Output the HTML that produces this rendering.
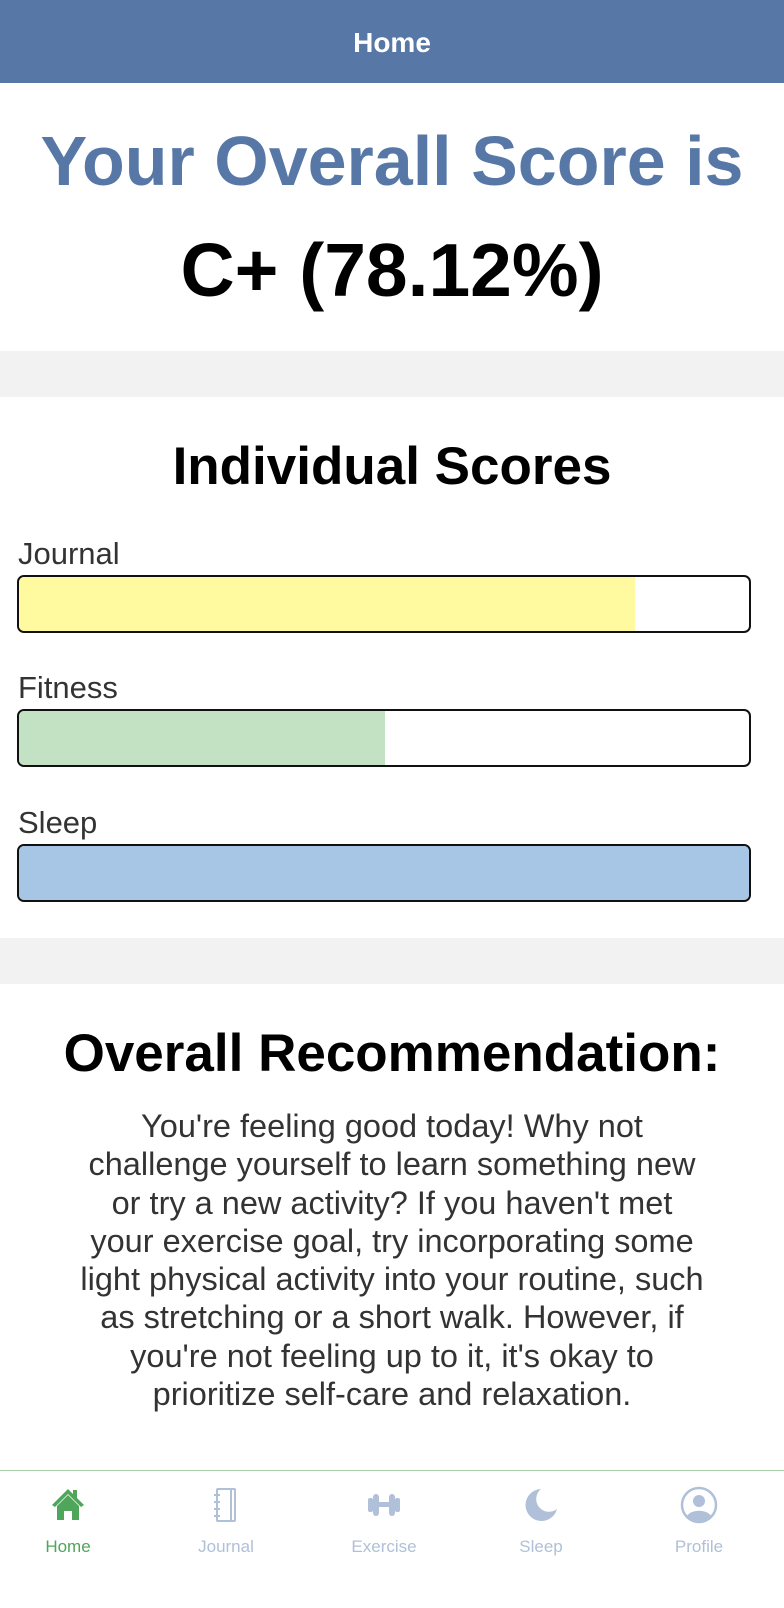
<!DOCTYPE html>
<html><head><style>
*{margin:0;padding:0;box-sizing:border-box}
body{width:784px;height:1608px;background:#fff;font-family:"Liberation Sans",sans-serif;position:relative;overflow:hidden}
.hdr{height:83px;background:#5778a6;color:#fff;font-size:28px;font-weight:bold;text-align:center;line-height:86px}
.t1{position:absolute;top:121px;width:100%;text-align:center;font-size:70px;font-weight:bold;color:#5778a6}
.t2{position:absolute;top:227px;width:100%;text-align:center;font-size:75px;font-weight:bold;color:#000}
.band{position:absolute;left:0;width:784px;height:46px;background:#f2f2f2}
.h2{position:absolute;width:100%;text-align:center;font-size:53px;font-weight:bold;color:#000}
.lbl{position:absolute;left:18px;font-size:31px;color:#333}
.bar{position:absolute;left:17px;width:734px;height:58px;border:2px solid #111;border-radius:7px;overflow:hidden;background:#fff}
.bar div{height:100%}
.p{position:absolute;top:1107px;left:0;width:784px;text-align:center;font-size:32.5px;line-height:38.3px;color:#333;white-space:nowrap}
.tab{position:absolute;top:1470px;left:0;width:784px;height:138px;border-top:1.5px solid #a8d0a8}
.it{position:absolute;top:0;width:156px;text-align:center}
.it svg{position:absolute;top:14px;left:58px}
.it span{position:absolute;top:66px;left:0;width:156px;font-size:17px;color:#b0c0d8}
</style></head><body>
<div class="hdr">Home</div>
<div class="t1">Your Overall Score is</div>
<div class="t2">C+ (78.12%)</div>
<div class="band" style="top:351px"></div>
<div class="h2" style="top:436px">Individual Scores</div>
<div class="lbl" style="top:536px">Journal</div>
<div class="bar" style="top:575px"><div style="width:616px;background:#fff9a0"></div></div>
<div class="lbl" style="top:670px">Fitness</div>
<div class="bar" style="top:709px"><div style="width:366px;background:#c3e2c3"></div></div>
<div class="lbl" style="top:805px">Sleep</div>
<div class="bar" style="top:844px"><div style="width:100%;background:#a7c6e6"></div></div>
<div class="band" style="top:938px"></div>
<div class="h2" style="top:1023px">Overall Recommendation:</div>
<div class="p">You're feeling good today! Why not<br>challenge yourself to learn something new<br>or try a new activity? If you haven't met<br>your exercise goal, try incorporating some<br>light physical activity into your routine, such<br>as stretching or a short walk. However, if<br>you're not feeling up to it, it's okay to<br>prioritize self-care and relaxation.</div>
<div class="tab">
<div class="it" style="left:-10px"><svg width="40" height="40" viewBox="0 0 40 40"><path d="M4 20 L20 4 L25 9 V5 H29 V13 L36 20 L33 22 L20 9 L7 22Z" fill="#4fa55a"/><path d="M9 21 L20 10 L31 21 V35 H24 V26 H16 V35 H9Z" fill="#4fa55a"/></svg><span style="color:#4fa55a">Home</span></div>
<div class="it" style="left:148px"><svg width="40" height="40" viewBox="0 0 40 40" fill="none" stroke="#b0c0d8" stroke-width="2"><rect x="11" y="4" width="18" height="32" rx="1"/><line x1="25" y1="4" x2="25" y2="36"/><path d="M8 10h6M8 17h6M8 24h6M8 31h6"/></svg><span>Journal</span></div>
<div class="it" style="left:306px"><svg width="40" height="40" viewBox="0 0 40 40" fill="#b0c0d8"><rect x="4" y="13" width="5" height="14" rx="2"/><rect x="9" y="9" width="6" height="22" rx="3"/><rect x="25" y="9" width="6" height="22" rx="3"/><rect x="31" y="13" width="5" height="14" rx="2"/><rect x="14" y="17" width="12" height="5"/></svg><span>Exercise</span></div>
<div class="it" style="left:463px"><svg width="40" height="40" viewBox="0 0 40 40"><path d="M20 4 A16 16 0 1 0 36 24 A12 12 0 0 1 20 4Z" fill="#b0c0d8"/></svg><span>Sleep</span></div>
<div class="it" style="left:621px"><svg width="40" height="40" viewBox="0 0 40 40"><circle cx="20" cy="20" r="17" fill="none" stroke="#b0c0d8" stroke-width="2.5"/><circle cx="20" cy="16" r="6" fill="#b0c0d8"/><path d="M8 31 C12 24 28 24 32 31 A17 17 0 0 1 8 31Z" fill="#b0c0d8"/></svg><span>Profile</span></div>
</div>
</body></html>
